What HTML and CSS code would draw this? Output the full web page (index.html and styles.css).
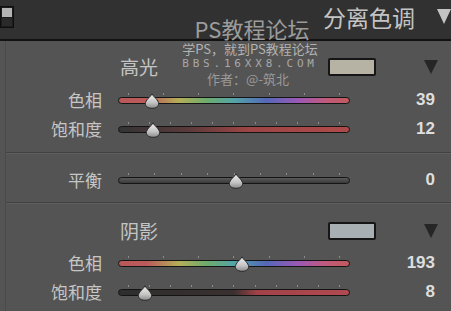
FILE: index.html
```html
<!DOCTYPE html>
<html lang="zh-CN">
<head>
    <meta charset="UTF-8">
    <title>分离色调</title>
    <link rel="stylesheet" href="styles.css">
</head>
<body>
    <div class="header">
        <svg class="toggle" width="14" height="22" viewBox="0 0 14 22">
            <rect x="0.5" y="0.5" width="13" height="21" fill="#1c1c1c" stroke="#0e0e0e"/>
            <rect x="2" y="2" width="10" height="9" fill="#b4b4b4"/>
            <rect x="2" y="12" width="10" height="8" fill="#2a2a2a"/>
        </svg>
        <span class="title">分离色调</span>
        <svg class="collapse" width="14" height="15" viewBox="0 0 14 15">
            <polygon points="0,0 14,0 7,15" fill="#c4c4c4"/>
        </svg>
    </div>

    <div class="watermark">
        <div class="wm-big">PS教程论坛</div>
        <div class="wm-line">学PS，就到PS教程论坛</div>
        <div class="wm-url">BBS.16XX8.COM</div>
        <div class="wm-author">作者：@-筑北</div>
    </div>

    <div class="panel">
        <div class="section first">
            <div class="head">
                <span class="head-title">高光</span>
                <span class="swatch light"></span>
                <svg class="arrow" width="14" height="14" viewBox="0 0 14 14">
                    <polygon points="0,0 14,0 7,14" fill="#262626"/>
                </svg>
            </div>
            <div class="row">
                <span class="label">色相</span>
                <div class="slider">
                    <div class="ticks"><i></i><i></i><i></i><i></i><i></i><i></i><i></i></div>
                    <div class="track hue"></div>
                    <svg class="thumb" style="left: 14.7%" width="16" height="16" viewBox="0 0 16 16"><use href="#drop"/></svg>
                </div>
                <span class="value">39</span>
            </div>
            <div class="row">
                <span class="label">饱和度</span>
                <div class="slider">
                    <div class="ticks"><i></i><i></i><i></i><i></i><i></i><i></i><i></i><i></i><i></i><i></i><i></i></div>
                    <div class="track sat"></div>
                    <svg class="thumb" style="left: 15.1%" width="16" height="16" viewBox="0 0 16 16"><use href="#drop"/></svg>
                </div>
                <span class="value">12</span>
            </div>
        </div>

        <div class="section middle">
            <div class="row">
                <span class="label">平衡</span>
                <div class="slider">
                    <div class="ticks"><i></i><i></i><i></i><i></i><i></i><i></i><i></i><i></i><i></i></div>
                    <div class="track balance"></div>
                    <svg class="thumb" style="left: 50.8%" width="16" height="16" viewBox="0 0 16 16"><use href="#drop"/></svg>
                </div>
                <span class="value">0</span>
            </div>
        </div>

        <div class="section last">
            <div class="head">
                <span class="head-title">阴影</span>
                <span class="swatch dark"></span>
                <svg class="arrow" width="14" height="14" viewBox="0 0 14 14">
                    <polygon points="0,0 14,0 7,14" fill="#262626"/>
                </svg>
            </div>
            <div class="row">
                <span class="label">色相</span>
                <div class="slider">
                    <div class="ticks"><i></i><i></i><i></i><i></i><i></i><i></i><i></i></div>
                    <div class="track hue"></div>
                    <svg class="thumb" style="left: 53.4%" width="16" height="16" viewBox="0 0 16 16"><use href="#drop"/></svg>
                </div>
                <span class="value">193</span>
            </div>
            <div class="row">
                <span class="label">饱和度</span>
                <div class="slider">
                    <div class="ticks"><i></i><i></i><i></i><i></i><i></i><i></i><i></i><i></i><i></i><i></i><i></i></div>
                    <div class="track sat shadow-sat"></div>
                    <svg class="thumb" style="left: 11.6%" width="16" height="16" viewBox="0 0 16 16"><use href="#drop"/></svg>
                </div>
                <span class="value">8</span>
            </div>
        </div>
    </div>

    <svg width="0" height="0" class="defs">
        <defs>
            <linearGradient id="silver" x1="0" y1="0" x2="0" y2="1">
                <stop offset="0" stop-color="#f0f0f0"/>
                <stop offset="0.6" stop-color="#c4c4c4"/>
                <stop offset="1" stop-color="#8a8a8a"/>
            </linearGradient>
            <path id="drop" d="M8 0.8 C9.5 4 14.6 7 14.6 10.6 C14.6 13.6 11.8 15.3 8 15.3 C4.2 15.3 1.4 13.6 1.4 10.6 C1.4 7 6.5 4 8 0.8 Z" fill="url(#silver)" stroke="#2a2a2a" stroke-width="1"/>
        </defs>
    </svg>
</body>
</html>
```

FILE: styles.css
```css
body {
    margin: 0;
    width: 451px;
    height: 311px;
    overflow: hidden;
    background: #545454;
    font-family: "Noto Sans CJK SC", "Noto Sans", sans-serif;
    color: #c8c8c8;
    position: relative;
}

.header {
    height: 39px;
    background: #313131;
    border-bottom: 2px solid #121212;
    display: flex;
    align-items: center;
}

.toggle {
    margin-top: -5px;
    flex: none;
}

.title {
    margin-left: auto;
    font-size: 23px;
    line-height: 1;
    color: #c4c4c4;
    margin-top: -4px;
}

.collapse {
    margin-left: 22px;
    margin-top: -6px;
}

.watermark {
    position: absolute;
    left: 178px;
    top: 16px;
    width: 144px;
    text-align: center;
    color: #a6a6a6;
}

.wm-big {
    font-size: 22px;
    line-height: 25px;
    color: #9c9c9c;
    margin-left: 4px;
}

.wm-line {
    font-size: 13px;
    line-height: 15px;
    color: #b2b2b2;
}

.wm-url {
    font-family: "DejaVu Sans Mono", monospace;
    font-size: 11px;
    line-height: 15px;
    letter-spacing: 3.8px;
    color: #a8a8a8;
}

.wm-author {
    font-size: 13px;
    line-height: 15px;
    color: #9a9a9a;
    margin-left: -4px;
}

.panel {
    margin-left: 5px;
    border-left: 1px solid #4a4a4a;
    height: 270px;
}

.section.first {
    padding: 10px 0 9px;
}

.section.middle {
    padding: 12px 0 8px;
    border-top: 1px solid #424242;
    box-shadow: inset 0 1px 0 #5e5e5e;
}

.section.last {
    padding: 12px 0 0;
    border-top: 1px solid #424242;
    box-shadow: inset 0 1px 0 #5e5e5e;
}

.head {
    display: flex;
    align-items: center;
    height: 30px;
    padding-left: 114px;
    padding-right: 13px;
    margin-bottom: 4px;
}

.head-title {
    font-size: 19px;
    color: #c4c4c4;
}

.swatch {
    margin-left: auto;
    width: 44px;
    height: 14px;
    border: 2px solid #161616;
    border-radius: 2px;
    margin-top: 2px;
}

.swatch.light {
    background: #b7b3a4;
}

.swatch.dark {
    background: #a8b0b4;
}

.arrow {
    margin-left: 48px;
    margin-top: 2px;
}

.section.last .head {
    margin-bottom: 3px;
}

.row {
    display: flex;
    align-items: center;
    height: 29px;
    padding-right: 16px;
}

.label {
    width: 96px;
    text-align: right;
    font-size: 17px;
    color: #c6c6c6;
}

.slider {
    position: relative;
    margin-left: 16px;
    width: 232px;
    height: 20px;
}

.ticks {
    display: flex;
    justify-content: space-between;
    padding: 0 10px;
    height: 2px;
    margin-top: 3px;
}

.ticks i {
    display: block;
    width: 1px;
    height: 2px;
    background: #8c8c8c;
}

.track {
    margin-top: 2px;
    height: 5px;
    border: 1px solid #141414;
    border-radius: 4px;
}

.track.hue {
    background: linear-gradient(90deg, #b85858 0%, #bb5a5a 12%, #b4ae58 26%, #6eac6c 38%, #54a4a8 50%, #5468b8 64%, #9c58b4 78%, #c05a7a 90%, #c05a5e 100%);
}

.track.sat {
    background: linear-gradient(90deg, #343434 0%, #5a3a3a 30%, #9c4444 55%, #b04a4a 100%);
}

.track.shadow-sat {
    background: linear-gradient(90deg, #2e2e2e 0%, #3a3030 50%, #a24248 60%, #b04a50 100%);
}

.track.balance {
    background: linear-gradient(180deg, #5a5a5a, #3a3a3a);
}

.thumb {
    position: absolute;
    top: 3px;
    margin-left: -8px;
}

.value {
    margin-left: auto;
    font-family: "Liberation Sans", sans-serif;
    font-weight: bold;
    font-size: 17px;
    color: #dedede;
}

.defs {
    position: absolute;
}
```
